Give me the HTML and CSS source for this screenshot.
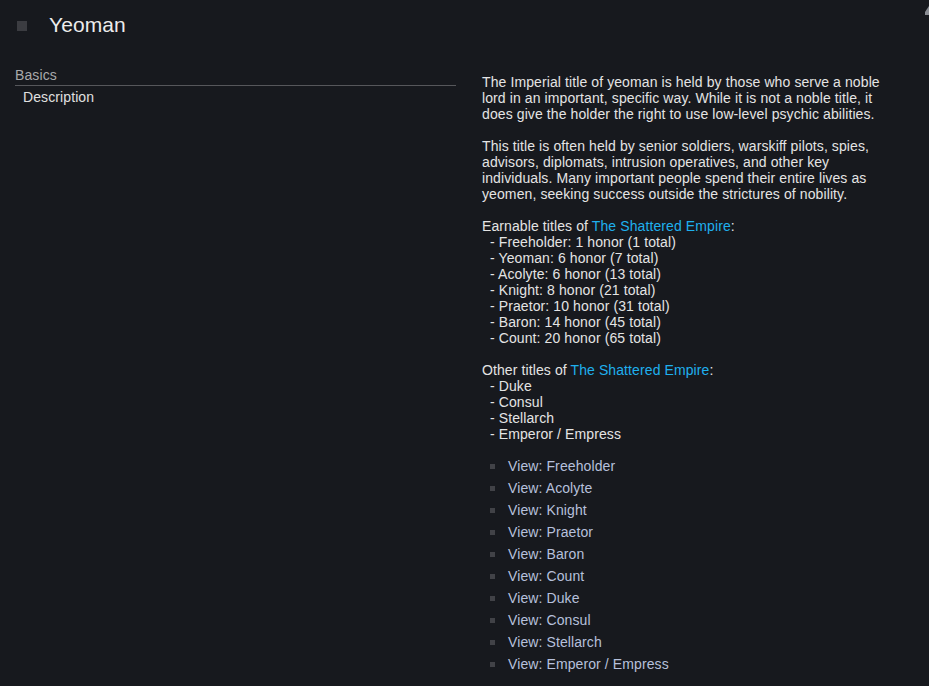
FILE: index.html
```html
<!DOCTYPE html>
<html>
<head>
<meta charset="utf-8">
<link rel="stylesheet" href="styles.css">
</head>
<body>
<div class="corner"><svg width="5" height="10" viewBox="0 0 5 10"><polygon points="5,0 5,9 1,9 1,6" fill="#8a8d94"/></svg></div>
<header class="header">
  <span class="icon"></span>
  <h1 class="title">Yeoman</h1>
</header>
<div class="main">
  <aside class="side">
    <div class="section">Basics</div>
    <div class="item">Description</div>
  </aside>
  <article class="content">
    <p class="para">The Imperial title of yeoman is held by those who serve a noble lord in an important, specific way. While it is not a noble title, it does give the holder the right to use low-level psychic abilities.</p>
    <p class="para">This title is often held by senior soldiers, warskiff pilots, spies, advisors, diplomats, intrusion operatives, and other key individuals. Many important people spend their entire lives as yeomen, seeking success outside the strictures of nobility.</p>
    <div class="para">
      <div>Earnable titles of <a class="link">The Shattered Empire</a>:</div>
      <div class="sub">- Freeholder: 1 honor (1 total)</div>
      <div class="sub">- Yeoman: 6 honor (7 total)</div>
      <div class="sub">- Acolyte: 6 honor (13 total)</div>
      <div class="sub">- Knight: 8 honor (21 total)</div>
      <div class="sub">- Praetor: 10 honor (31 total)</div>
      <div class="sub">- Baron: 14 honor (45 total)</div>
      <div class="sub">- Count: 20 honor (65 total)</div>
    </div>
    <div class="para">
      <div>Other titles of <a class="link">The Shattered Empire</a>:</div>
      <div class="sub">- Duke</div>
      <div class="sub">- Consul</div>
      <div class="sub">- Stellarch</div>
      <div class="sub">- Emperor / Empress</div>
    </div>
    <ul class="views">
      <li class="view"><a>View: Freeholder</a></li>
      <li class="view"><a>View: Acolyte</a></li>
      <li class="view"><a>View: Knight</a></li>
      <li class="view"><a>View: Praetor</a></li>
      <li class="view"><a>View: Baron</a></li>
      <li class="view"><a>View: Count</a></li>
      <li class="view"><a>View: Duke</a></li>
      <li class="view"><a>View: Consul</a></li>
      <li class="view"><a>View: Stellarch</a></li>
      <li class="view"><a>View: Emperor / Empress</a></li>
    </ul>
  </article>
</div>
</body>
</html>
```
FILE: styles.css
```css
html, body {
  margin: 0;
  padding: 0;
  background: #17191e;
}
body {
  font-family: "Liberation Sans", sans-serif;
  font-size: 14px;
  line-height: 16px;
  letter-spacing: 0.1px;
  color: #e4e4e4;
  height: 686px;
  overflow: hidden;
  position: relative;
}
.corner {
  position: absolute;
  top: 6px;
  right: 0;
  line-height: 0;
}
.header {
  display: flex;
  align-items: center;
  padding: 12px 0 0 17px;
  height: 26px;
}
.icon {
  width: 10px;
  height: 10px;
  background: #3b3c41;
  margin-top: 2px;
}
.title {
  margin: 0 0 0 22px;
  font-size: 21px;
  font-weight: normal;
  line-height: 26px;
  color: #ececec;
}
.main {
  display: flex;
  padding: 29px 0 0 15px;
}
.side {
  width: 441px;
  flex: none;
}
.section {
  color: #a9a9ab;
  border-bottom: 1px solid #56575b;
  padding-bottom: 2px;
}
.item {
  padding: 3px 0 0 8px;
  color: #e0e0e0;
}
.content {
  margin: 7px 0 0 26px;
  width: 405px;
}
.para {
  margin: 0 0 16px 0;
}
.sub {
  padding-left: 8px;
}
.link {
  color: #1fb0ee;
}
.views {
  list-style: none;
  margin: -3px 0 0 0;
  padding: 0;
}
.view {
  display: flex;
  align-items: center;
  height: 22px;
  padding-left: 8px;
  color: #b6c0dc;
}
.view::before {
  content: "";
  width: 5px;
  height: 5px;
  background: #414247;
  margin-right: 13px;
}
```
